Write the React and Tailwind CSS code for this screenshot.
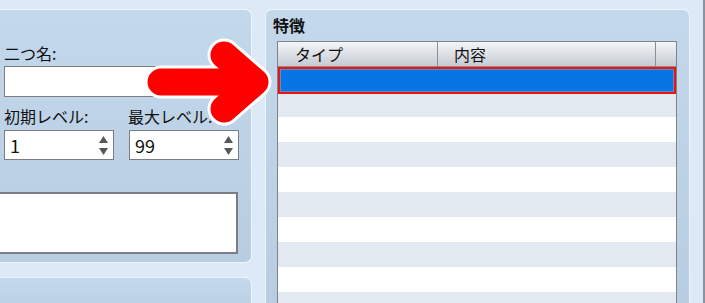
import React from "react";

const Spin = ({ value }) => (
  <div className="w-[110px] h-[30px] bg-white border border-[#7a7d82] flex items-center pl-[5px] pr-[5px]">
    <span className="flex-1 text-[18px] leading-[22px] text-[#111]">{value}</span>
    <div className="flex flex-col gap-[5px]">
      <svg width="9" height="7" viewBox="0 0 9 7">
        <path d="M4.5 0 L9 7 L0 7 Z" fill="#55585c" />
      </svg>
      <svg width="9" height="7" viewBox="0 0 9 7">
        <path d="M0 0 L9 0 L4.5 7 Z" fill="#55585c" />
      </svg>
    </div>
  </div>
);

const rows = Array.from({ length: 9 });

const App = () => {
  return (
    <div className="relative w-[705px] h-[303px] overflow-hidden bg-[#dde9f7] flex font-['Noto_Sans_CJK_JP',sans-serif] text-[16px] text-[#111]">
      <div className="w-[252px] flex flex-col pt-[9px] gap-[14px]">
        <div className="h-[254px] shrink-0 rounded-r-[7px] border border-l-0 border-[#eef4fb] bg-gradient-to-b from-[#c4d8ec] to-[#b9cde2] pl-[4px] pt-[33px]">
          <div className="h-[20px] leading-[20px]">二つ名:</div>
          <div className="mt-[3px] w-[234px] h-[31px] bg-white border border-[#7a7d82]" />
          <div className="mt-[9px] flex h-[20px] leading-[20px]">
            <span className="w-[124px]">初期レベル:</span>
            <span>最大レベル:</span>
          </div>
          <div className="mt-[4px] flex gap-[15px]">
            <Spin value="1" />
            <Spin value="99" />
          </div>
          <div className="mt-[32px] -ml-[6px] w-[240px] h-[62px] bg-white border-2 border-[#7a7d82]" />
        </div>
        <div className="flex-1 rounded-tr-[7px] border border-l-0 border-b-0 border-[#eef4fb] bg-gradient-to-b from-[#c4d8ec] to-[#bed2e7]" />
      </div>

      <div className="ml-[13px] mt-[9px] w-[425px] rounded-t-[7px] border border-b-0 border-[#eef4fb] bg-gradient-to-b from-[#c4d8ec] to-[#b9cde2] pl-[11px] pt-[5px]">
        <div className="h-[20px] leading-[20px] font-bold -ml-[4px]">特徴</div>
        <div className="mt-[6px] w-[400px] h-[300px] bg-white border border-b-0 border-[#7d838b]">
          <div className="flex h-[25px] bg-gradient-to-b from-[#f4f5f7] to-[#c6cbd2] border-b border-[#8a9098]">
            <div className="w-[160px] border-r border-[#8a9098] pl-[17px] leading-[24px]">タイプ</div>
            <div className="w-[218px] border-r border-[#8a9098] pl-[16px] leading-[24px]">内容</div>
            <div className="flex-1" />
          </div>
          <div className="h-[27px] border-2 border-[#f01010]">
            <div className="h-full bg-[#0676e4] border border-[#5b8ec4]" />
          </div>
          <div className="h-[23px] bg-[#e3e9f1]" />
          {rows.map((_, i) => (
            <div key={i} className={i % 2 === 0 ? "h-[25px] bg-white" : "h-[25px] bg-[#e3e9f1]"} />
          ))}
        </div>
      </div>

      <div className="ml-[13px] w-[2px] bg-[#8b929b]" />

      <svg className="absolute left-0 top-0 pointer-events-none" width="705" height="303">
        <g fill="none" strokeLinecap="round" strokeLinejoin="round">
          <path d="M161 82 L252 82 M224 55 L255 82 L224 109" stroke="#ffffff" strokeWidth="33" />
          <path d="M161 82 L252 82 M224 55 L255 82 L224 109" stroke="#ff0000" strokeWidth="27" />
        </g>
      </svg>
    </div>
  );
};

export default App;
